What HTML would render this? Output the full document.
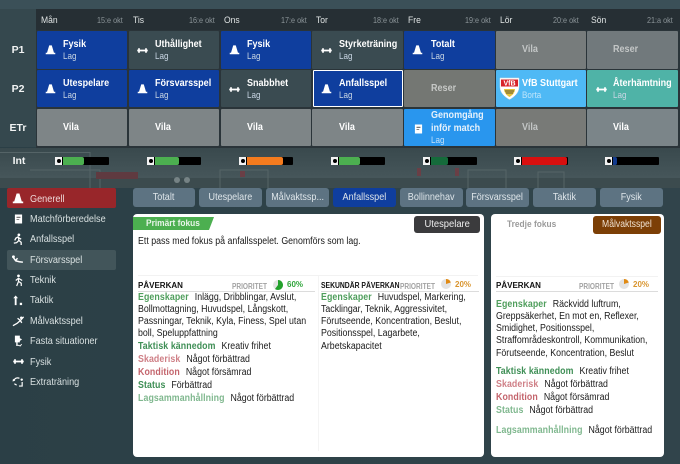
<!DOCTYPE html>
<html><head><meta charset="utf-8"><style>
html,body{margin:0;padding:0;width:680px;height:464px;overflow:hidden;background:#2c3f45}
#r{position:relative;width:680px;height:464px;overflow:hidden;font-family:"Liberation Sans",sans-serif;color:#fff;background:linear-gradient(90deg,#2b3f46 0%,#2f4349 60%,#31444b 100%)}
#r div,#r svg{position:absolute}
.c{border-radius:1px}
.t,.s,.d,.dt,.n,.l,.p,.sq{transform-origin:0 50%}
.t{font-weight:bold;font-size:10.5px;white-space:nowrap;line-height:12px;transform:scaleX(.86)}
.s{font-size:9.5px;color:#c9d6e4;white-space:nowrap;line-height:11px;transform:scaleX(.85)}
.d{font-size:9.5px;color:#e0e4e4;white-space:nowrap;transform:scaleX(.9)}
.dt{font-size:8.5px;color:#8b9498;top:15px;white-space:nowrap;transform:scaleX(.85)}
.lb{left:0;width:36px;text-align:center;font-weight:bold;font-size:10.5px;color:#f2f4f4}
.n{font-size:10.5px;color:#d8e0e0;left:30px;white-space:nowrap;line-height:12px;transform:scaleX(.87)}
.tb{top:188px;height:19px;background:#5d7382;border-radius:3px;text-align:center;font-size:10.5px;line-height:19px;color:#dfe6ea;width:63px;white-space:nowrap}
.tb span{display:inline-block;transform:scaleX(.86)}
.card{background:#fff;border-radius:4px}
.l{font-size:10px;line-height:12px;color:#1a1a1a;white-space:nowrap;transform:scaleX(.88)}
.l b{margin-right:4px;letter-spacing:.1px}
.g{color:#4f9e5c}.g2{color:#3f8f56}.rd{color:#c4656d}.rl{color:#cf8087}.lg{color:#80b88f}
.h{font-size:8px;font-weight:bold;color:#111;white-space:nowrap;line-height:10px}
.p{font-size:8px;font-weight:bold;color:#a2a2a2;white-space:nowrap;line-height:10px;transform:scaleX(.82)}
.sq{transform:scaleX(.85)}
.bar{height:8px;width:54px;top:157px;background:#000;border-radius:1px}
.bar i{position:absolute;left:0;top:0;width:7px;height:8px;background:#f2f2f2;display:block}
.bar i:after{content:"";position:absolute;left:1.5px;top:2px;width:4px;height:4px;border-radius:50%;background:#000}
.bar u{position:absolute;left:8px;top:0;height:8px;display:block;border-radius:0 2px 2px 0}
</style></head><body><div id="r">
<svg width="0" height="0" style="left:0;top:0"><defs>
<symbol id="cone" viewBox="0 0 12 12"><path d="M4.6 1.5h2.8L9.8 9.5H11.2V11.2H.8V9.5H2.2Z" fill="#fff"/></symbol>
<symbol id="db" viewBox="0 0 12 8"><path d="M0 3h1V1.4h2V3h6V1.4h2V3h1v2h-1v1.6H9V5H3v1.6H1V5H0Z" fill="#fff"/></symbol>
<symbol id="bk" viewBox="0 0 10 11"><path d="M1 .5h8v10H1Z" fill="#fff"/><path d="M2.8 3h4.4v1.4H2.8zM2.8 5.6h3v1H2.8z" fill="#777"/></symbol>
<symbol id="run" viewBox="0 0 12 14"><circle cx="7.5" cy="2" r="1.5" fill="#fff"/><path d="M7 4 4.2 5.5 3 8M7 4l.5 4L10 10v3M7.5 8 5 10.5 2 11M7.2 5l2.8 1.6" stroke="#fff" stroke-width="1.4" fill="none"/></symbol>
<symbol id="slide" viewBox="0 0 14 10"><circle cx="2.5" cy="2" r="1.6" fill="#fff"/><path d="M2.5 3 5 6.5 9 7.5 13 8M5 6 7 3.5" stroke="#fff" stroke-width="1.6" fill="none"/></symbol>
<symbol id="tek" viewBox="0 0 12 14"><circle cx="6" cy="2" r="1.5" fill="#fff"/><path d="M6 4v4L4 13M6 8l3 2v3M6 4.5 3 7M6 4.5l4 2.5" stroke="#fff" stroke-width="1.3" fill="none"/></symbol>
<symbol id="tak" viewBox="0 0 12 12"><path d="M4 .5 6.6 3.5H5V11H3V3.5H1.4Z" fill="#fff"/><rect x="8.5" y="8.5" width="2.5" height="2.5" fill="#fff"/></symbol>
<symbol id="gk" viewBox="0 0 14 12"><circle cx="10" cy="2.5" r="1.4" fill="#fff"/><path d="M1 11 5.5 8.5 9 5.5 10.5 8M9 5.5 12.5 1.5M9 5.5 6 3" stroke="#fff" stroke-width="1.4" fill="none"/></symbol>
<symbol id="fs" viewBox="0 0 10 13"><path d="M1 .5h5.5v3L9 4.5 6.5 6.5V8H4v4H2.5V8H1Z" fill="#fff"/><path d="M4 11l3 1 1.5-2" stroke="#fff" fill="none"/></symbol>
<symbol id="ex" viewBox="0 0 14 12"><path d="M2 5C3 2 6 1.5 8 2.5M11 6.5V11H7.5M2.5 8.5 5 10" stroke="#fff" stroke-width="1.3" fill="none"/><path d="M1 3 3.5 5 .5 6Z" fill="#fff"/><circle cx="10.5" cy="4" r="1.3" fill="#fff"/></symbol>
<symbol id="pie60" viewBox="0 0 10 10"><circle cx="5" cy="5" r="5" fill="#e3e3e3"/><path d="M5 5V0A5 5 0 1 1 2 9Z" fill="#23a12c"/></symbol>
<symbol id="pie20" viewBox="0 0 10 10"><circle cx="5" cy="5" r="5" fill="#e3e3e3"/><path d="M5 5V0A5 5 0 0 1 9.8 3.5Z" fill="#e08a14"/></symbol>
</defs></svg>

<!-- background -->
<div style="left:0;top:0;width:680px;height:9px;background:#3b5058"></div>
<div style="left:0;top:9px;width:36px;height:138px;background:#35484e"></div>
<div style="left:36px;top:9px;width:644px;height:21px;background:#262f34"></div>
<div style="left:36px;top:30px;width:644px;height:118px;background:#2a3439"></div>
<div style="left:0;top:148px;width:680px;height:30px;background:linear-gradient(#39494d,#46565a)"></div>
<div style="left:0;top:178px;width:680px;height:10px;background:#3c4b4e"></div>
<svg style="left:0;top:148px" width="680" height="42">
<path d="M0 4.5H90V42M30 22H100V42" fill="none" stroke="#556467"/>
<rect x="96" y="24" width="42" height="7" fill="#5f3a40"/>
<rect x="220" y="22" width="48" height="30" fill="none" stroke="#566567"/>
<rect x="240" y="23" width="5" height="6" fill="#6a3f46"/>
<rect x="468" y="22" width="38" height="20" fill="none" stroke="#566567"/>
<rect x="538" y="24" width="26" height="20" fill="none" stroke="#566567"/>
<circle cx="177" cy="32" r="3" fill="#768385"/><circle cx="187" cy="32" r="3" fill="#768385"/>
<rect x="417" y="20" width="4" height="8" fill="#6a3f46"/><rect x="455" y="20" width="4" height="8" fill="#6a3f46"/>
</svg>

<!-- header -->
<div class="d" style="left:41px;top:15px">Mån</div><div class="dt" style="left:97px">15:e okt</div>
<div class="d" style="left:133px;top:15px">Tis</div><div class="dt" style="left:189px">16:e okt</div>
<div class="d" style="left:224px;top:15px">Ons</div><div class="dt" style="left:281px">17:e okt</div>
<div class="d" style="left:316px;top:15px">Tor</div><div class="dt" style="left:373px">18:e okt</div>
<div class="d" style="left:408px;top:15px">Fre</div><div class="dt" style="left:465px">19:e okt</div>
<div class="d" style="left:500px;top:15px">Lör</div><div class="dt" style="left:553px">20:e okt</div>
<div class="d" style="left:591px;top:15px">Sön</div><div class="dt" style="left:647px">21:a okt</div>

<div class="lb" style="top:44px">P1</div>
<div class="lb" style="top:83px">P2</div>
<div class="lb" style="top:122px">ETr</div>
<div class="lb" style="top:155px;left:1px">Int</div>

<!-- row 1 -->
<div class="c" style="left:37px;top:31px;width:90px;height:38px;background:#0f3e9e"></div>
<svg style="left:45px;top:44px" width="11" height="11"><use href="#cone"/></svg>
<div class="t" style="left:63px;top:38px">Fysik</div><div class="s" style="left:63px;top:51px">Lag</div>
<div class="c" style="left:129px;top:31px;width:90px;height:38px;background:#3a4b51"></div>
<svg style="left:137px;top:47px" width="11" height="7"><use href="#db"/></svg>
<div class="t" style="left:155px;top:38px">Uthållighet</div><div class="s" style="left:155px;top:51px">Lag</div>
<div class="c" style="left:221px;top:31px;width:90px;height:38px;background:#0f3e9e"></div>
<svg style="left:229px;top:44px" width="11" height="11"><use href="#cone"/></svg>
<div class="t" style="left:247px;top:38px">Fysik</div><div class="s" style="left:247px;top:51px">Lag</div>
<div class="c" style="left:312px;top:31px;width:91px;height:38px;background:#3a4b51"></div>
<svg style="left:321px;top:47px" width="11" height="7"><use href="#db"/></svg>
<div class="t" style="left:339px;top:38px">Styrketräning</div><div class="s" style="left:339px;top:51px">Lag</div>
<div class="c" style="left:404px;top:31px;width:91px;height:38px;background:#0f3e9e"></div>
<svg style="left:412px;top:44px" width="11" height="11"><use href="#cone"/></svg>
<div class="t" style="left:431px;top:38px">Totalt</div><div class="s" style="left:431px;top:51px">Lag</div>
<div class="c" style="left:496px;top:31px;width:90px;height:38px;background:#777c7c"></div>
<div class="t" style="left:522px;top:43px;color:#c3c6c6">Vila</div>
<div class="c" style="left:587px;top:31px;width:91px;height:38px;background:#71797c"></div>
<div class="t" style="left:613px;top:43px;color:#c3c6c6">Reser</div>

<!-- row 2 -->
<div class="c" style="left:37px;top:70px;width:90px;height:37px;background:#0f3e9e"></div>
<svg style="left:45px;top:83px" width="11" height="11"><use href="#cone"/></svg>
<div class="t" style="left:63px;top:77px">Utespelare</div><div class="s" style="left:63px;top:90px">Lag</div>
<div class="c" style="left:129px;top:70px;width:90px;height:37px;background:#0f3e9e"></div>
<svg style="left:137px;top:83px" width="11" height="11"><use href="#cone"/></svg>
<div class="t" style="left:155px;top:77px">Försvarsspel</div><div class="s" style="left:155px;top:90px">Lag</div>
<div class="c" style="left:221px;top:70px;width:90px;height:37px;background:#3a4b51"></div>
<svg style="left:229px;top:86px" width="11" height="7"><use href="#db"/></svg>
<div class="t" style="left:247px;top:77px">Snabbhet</div><div class="s" style="left:247px;top:90px">Lag</div>
<div class="c" style="left:313px;top:70px;width:88px;height:35px;background:#0f3e9e;border:1.5px solid #fff"></div>
<svg style="left:321px;top:83px" width="11" height="11"><use href="#cone"/></svg>
<div class="t" style="left:339px;top:77px">Anfallsspel</div><div class="s" style="left:339px;top:90px">Lag</div>
<div class="c" style="left:404px;top:70px;width:91px;height:37px;background:#747773"></div>
<div class="t" style="left:431px;top:82px;color:#c6c8c6">Reser</div>
<div class="c" style="left:496px;top:70px;width:90px;height:37px;background:#4fb9f5"></div>
<svg style="left:499px;top:77px" width="21" height="23" viewBox="0 0 21 23"><path d="M1 1H20V10C20 16 15 20 10.5 22.5 6 20 1 16 1 10Z" fill="#fff" stroke="#ddd" stroke-width=".5"/><rect x="2" y="2.5" width="17" height="7" fill="#d8232a"/><text x="10.5" y="8.5" font-family="Liberation Sans" font-size="7" font-weight="bold" fill="#fff" text-anchor="middle">VfB</text><path d="M5 12H16C16 16 13 18.5 10.5 20 8 18.5 5 16 5 12Z" fill="#e7c33a"/><path d="M6 14h9M7 16h7" stroke="#333" stroke-width=".8"/></svg>
<div class="t" style="left:522px;top:77px">VfB Stuttgart</div><div class="s" style="left:522px;top:90px;color:#bfe5fb">Borta</div>
<div class="c" style="left:587px;top:70px;width:91px;height:37px;background:#4fb3a7"></div>
<svg style="left:596px;top:86px" width="11" height="7"><use href="#db"/></svg>
<div class="t" style="left:613px;top:77px">Återhämtning</div><div class="s" style="left:613px;top:90px">Lag</div>

<!-- row 3 -->
<div class="c" style="left:37px;top:109px;width:90px;height:37px;background:#7e8587"></div>
<div class="t" style="left:63px;top:121px">Vila</div>
<div class="c" style="left:129px;top:109px;width:90px;height:37px;background:#7e8587"></div>
<div class="t" style="left:155px;top:121px">Vila</div>
<div class="c" style="left:221px;top:109px;width:90px;height:37px;background:#7e8587"></div>
<div class="t" style="left:247px;top:121px">Vila</div>
<div class="c" style="left:312px;top:109px;width:91px;height:37px;background:#7e8587"></div>
<div class="t" style="left:339px;top:121px">Vila</div>
<div class="c" style="left:404px;top:109px;width:91px;height:37px;background:#2996ee"></div>
<svg style="left:414px;top:124px" width="9" height="10"><use href="#bk"/></svg>
<div class="t" style="left:431px;top:109px;color:#e6f1fb">Genomgång</div>
<div class="t" style="left:431px;top:122px;color:#e6f1fb">inför match</div>
<div class="s" style="left:431px;top:135px;color:#c3e0f9">Lag</div>
<div class="c" style="left:496px;top:109px;width:90px;height:37px;background:#787a77"></div>
<div class="t" style="left:522px;top:121px;color:#c3c6c6">Vila</div>
<div class="c" style="left:587px;top:109px;width:91px;height:37px;background:#7b8589"></div>
<div class="t" style="left:613px;top:121px">Vila</div>

<!-- intensity bars -->
<div class="bar" style="left:55px"><i></i><u style="width:21px;background:#4caf50"></u></div>
<div class="bar" style="left:147px"><i></i><u style="width:24px;background:#4caf50"></u></div>
<div class="bar" style="left:239px"><i></i><u style="width:36px;background:#f47b1e"></u></div>
<div class="bar" style="left:331px"><i></i><u style="width:21px;background:#4caf50"></u></div>
<div class="bar" style="left:423px"><i></i><u style="width:17px;background:#156b3b"></u></div>
<div class="bar" style="left:514px"><i></i><u style="width:45px;background:#d80f0f"></u></div>
<div class="bar" style="left:605px"><i></i><u style="width:4px;background:#123a8c"></u></div>

<!-- sidebar -->
<div style="left:7px;top:188px;width:109px;height:20px;background:#98262a;border-radius:2px"></div>
<div style="left:7px;top:250px;width:109px;height:20px;background:#42555a;border-radius:2px"></div>
<svg style="left:12px;top:192px" width="12" height="12"><use href="#cone"/></svg>
<svg style="left:14px;top:214px" width="9" height="10"><use href="#bk"/></svg>
<svg style="left:12px;top:233px" width="11" height="13"><use href="#run"/></svg>
<svg style="left:11px;top:255px" width="13" height="9"><use href="#slide"/></svg>
<svg style="left:13px;top:274px" width="11" height="13"><use href="#tek"/></svg>
<svg style="left:12px;top:295px" width="11" height="11"><use href="#tak"/></svg>
<svg style="left:12px;top:315px" width="13" height="12"><use href="#gk"/></svg>
<svg style="left:14px;top:335px" width="9" height="12"><use href="#fs"/></svg>
<svg style="left:13px;top:358px" width="11" height="7"><use href="#db"/></svg>
<svg style="left:12px;top:376px" width="13" height="11"><use href="#ex"/></svg>
<div class="n" style="top:193px;color:#eed9d9">Generell</div>
<div class="n" style="top:213px">Matchförberedelse</div>
<div class="n" style="top:233px">Anfallsspel</div>
<div class="n" style="top:254px">Försvarsspel</div>
<div class="n" style="top:274px">Teknik</div>
<div class="n" style="top:294px">Taktik</div>
<div class="n" style="top:315px">Målvaktsspel</div>
<div class="n" style="top:335px">Fasta situationer</div>
<div class="n" style="top:356px">Fysik</div>
<div class="n" style="top:376px">Extraträning</div>

<!-- tabs -->
<div class="tb" style="left:133px;width:62px"><span>Totalt</span></div>
<div class="tb" style="left:199px"><span>Utespelare</span></div>
<div class="tb" style="left:266px"><span>Målvaktssp...</span></div>
<div class="tb" style="left:333px;background:#0f3e9e"><span>Anfallsspel</span></div>
<div class="tb" style="left:400px"><span>Bollinnehav</span></div>
<div class="tb" style="left:466px"><span>Försvarsspel</span></div>
<div class="tb" style="left:533px"><span>Taktik</span></div>
<div class="tb" style="left:600px"><span>Fysik</span></div>

<!-- card 1 -->
<div class="card" style="left:133px;top:214px;width:351px;height:243px"></div>
<svg style="left:133px;top:217px" width="82" height="14"><path d="M0 0H81L76 13H0Z" fill="#4caf50"/></svg>
<div class="sq" style="left:146px;top:218px;font-size:9.5px;font-weight:bold;color:#e8f5e9;line-height:11px;white-space:nowrap;transform:scaleX(.88)">Primärt fokus</div>
<div style="left:414px;top:216px;width:66px;height:17px;background:#3b3b3d;border-radius:3px;text-align:center;font-size:10px;line-height:18px;color:#eee"><span style="display:inline-block;transform:scaleX(.94)">Utespelare</span></div>
<div class="l" style="left:138px;top:236px">Ett pass med fokus på anfallsspelet. Genomförs som lag.</div>
<div style="left:138px;top:275px;width:340px;height:1px;background:#f2f2f2"></div>
<div style="left:318px;top:276px;width:1px;height:175px;background:#f4f4f4"></div>
<div class="h" style="left:138px;top:281px">PÅVERKAN</div>
<div class="p" style="left:232px;top:282px">PRIORITET</div>
<svg style="left:273px;top:280px" width="10" height="10"><use href="#pie60"/></svg>
<div style="left:287px;top:280px;font-size:8px;font-weight:bold;color:#2fa53a;line-height:10px">60%</div>
<div style="left:138px;top:291px;width:177px;height:1px;background:#dcdcdc"></div>
<div class="l" style="left:138px;top:292px"><b class="g">Egenskaper</b> Inlägg, Dribblingar, Avslut,</div>
<div class="l" style="left:138px;top:304px">Bollmottagning, Huvudspel, Långskott,</div>
<div class="l" style="left:138px;top:316px">Passningar, Teknik, Kyla, Finess, Spel utan</div>
<div class="l" style="left:138px;top:328px">boll, Speluppfattning</div>
<div class="l" style="left:138px;top:341px"><b class="g2">Taktisk kännedom</b> Kreativ frihet</div>
<div class="l" style="left:138px;top:354px"><b class="rl">Skaderisk</b> Något förbättrad</div>
<div class="l" style="left:138px;top:367px"><b class="rd">Kondition</b> Något försämrad</div>
<div class="l" style="left:138px;top:380px"><b class="g2">Status</b> Förbättrad</div>
<div class="l" style="left:138px;top:393px"><b class="lg">Lagsammanhållning</b> Något förbättrad</div>

<div class="h sq" style="left:321px;top:281px">SEKUNDÄR PÅVERKAN</div>
<div class="p" style="left:400px;top:282px">PRIORITET</div>
<svg style="left:441px;top:279px" width="10" height="10"><use href="#pie20"/></svg>
<div style="left:455px;top:280px;font-size:8px;font-weight:bold;color:#d9952f;line-height:10px">20%</div>
<div style="left:321px;top:291px;width:158px;height:1px;background:#dcdcdc"></div>
<div class="l" style="left:321px;top:292px"><b class="g">Egenskaper</b> Huvudspel, Markering,</div>
<div class="l" style="left:321px;top:304px">Tacklingar, Teknik, Aggressivitet,</div>
<div class="l" style="left:321px;top:316px">Förutseende, Koncentration, Beslut,</div>
<div class="l" style="left:321px;top:328px">Positionsspel, Lagarbete,</div>
<div class="l" style="left:321px;top:341px">Arbetskapacitet</div>

<!-- card 2 -->
<div class="card" style="left:491px;top:214px;width:173px;height:243px"></div>
<div class="sq" style="left:507px;top:219px;font-size:9.5px;font-weight:bold;color:#9b9b9b;line-height:11px;white-space:nowrap;transform:scaleX(.88)">Tredje fokus</div>
<div style="left:593px;top:216px;width:68px;height:18px;background:#7c3f06;border-radius:3px;text-align:center;font-size:10px;line-height:18px;color:#f0e2d2;white-space:nowrap"><span style="display:inline-block;transform:scaleX(.86)">Målvaktsspel</span></div>
<div style="left:496px;top:276px;width:162px;height:1px;background:#f2f2f2"></div>
<div class="h" style="left:496px;top:281px">PÅVERKAN</div>
<div class="p" style="left:579px;top:282px">PRIORITET</div>
<svg style="left:619px;top:279px" width="10" height="10"><use href="#pie20"/></svg>
<div style="left:633px;top:280px;font-size:8px;font-weight:bold;color:#d9952f;line-height:10px">20%</div>
<div style="left:496px;top:291px;width:162px;height:1px;background:#dcdcdc"></div>
<div class="l" style="left:496px;top:299px"><b class="g">Egenskaper</b> Räckvidd luftrum,</div>
<div class="l" style="left:496px;top:311px">Greppsäkerhet, En mot en, Reflexer,</div>
<div class="l" style="left:496px;top:323px">Smidighet, Positionsspel,</div>
<div class="l" style="left:496px;top:335px">Straffområdeskontroll, Kommunikation,</div>
<div class="l" style="left:496px;top:348px">Förutseende, Koncentration, Beslut</div>
<div class="l" style="left:496px;top:366px"><b class="g2">Taktisk kännedom</b> Kreativ frihet</div>
<div class="l" style="left:496px;top:379px"><b class="rl">Skaderisk</b> Något förbättrad</div>
<div class="l" style="left:496px;top:392px"><b class="rd">Kondition</b> Något försämrad</div>
<div class="l" style="left:496px;top:405px"><b class="lg">Status</b> Något förbättrad</div>
<div class="l" style="left:496px;top:425px"><b class="lg">Lagsammanhållning</b> Något förbättrad</div>
</div></body></html>
